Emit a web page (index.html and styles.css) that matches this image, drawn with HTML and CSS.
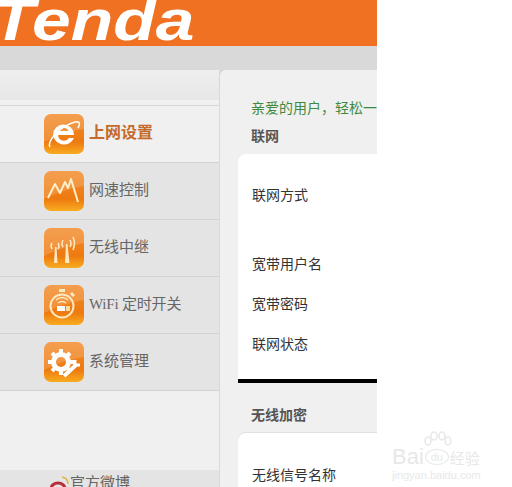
FILE: index.html
```html
<!DOCTYPE html>
<html lang="zh-CN">
<head>
    <meta charset="UTF-8" />
    <title>Tenda</title>
    <link rel="stylesheet" href="styles.css">
</head>
<body>
<div class="page">
    <div class="header"><div class="logo">Tenda</div></div>
    <div class="band"></div>

    <div class="content">
        <div class="sidebar">
            <div class="tab"></div>
            <div class="menu">
                <div class="menu-item active">
                    <svg class="icon" viewBox="0 0 40 40">
                        <path class="icon-top" d="M0 0h40v15q-20 3-40 13z"/>
                        <path d="M9 21a10.500 10.500 0 1 1 21 0H14a6 6 0 0 0 11 3h5a11 11 0 0 1-21-3zM14.500 17h10a5.500 5.500 0 0 0-10 0z" fill="#fff" fill-rule="evenodd"/>
                        <path d="M6 33c-3-5 8-20 25-25 4-1 6 1 3 6" fill="none" stroke="#fff" stroke-width="1.500"/>
                    </svg>
                    <span class="menu-text">上网设置</span>
                </div>
                <div class="menu-item">
                    <svg class="icon" viewBox="0 0 40 40">
                        <path class="icon-top" d="M0 0h40v15q-20 3-40 13z"/>
                        <path d="M4 27L11 13l5 9 5-11 3 6 3-9 7 23" fill="none" stroke="#ffeec8" stroke-width="2" stroke-linejoin="round"/>
                    </svg>
                    <span class="menu-text">网速控制</span>
                </div>
                <div class="menu-item">
                    <svg class="icon" viewBox="0 0 40 40">
                        <path class="icon-top" d="M0 0h40v15q-20 3-40 13z"/>
                        <path d="M10 35l1-16h1.500l1 16zM21 35l1-19h1.500l2 19z" fill="#ffe9c0"/>
                        <path d="M8 15q-2 3 0 6M14 15q2 3 0 6M19 12q-2 4 0 7M26 12q2 4 0 7M29 9q3 6 0 13" fill="none" stroke="#ffe9c0" stroke-width="1.500"/>
                    </svg>
                    <span class="menu-text">无线中继</span>
                </div>
                <div class="menu-item">
                    <svg class="icon" viewBox="0 0 40 40">
                        <path class="icon-top" d="M0 0h40v15q-20 3-40 13z"/>
                        <circle cx="18" cy="21" r="11.500" fill="none" stroke="#ffe9c0" stroke-width="2"/>
                        <path d="M15 4h6v3h-6zM28 7l3 3-2 2-3-3z" fill="#ffe9c0"/>
                        <path d="M12 15q6-5 12 0M14 18q4-3 8 0" fill="none" stroke="#ffe9c0" stroke-width="1.500"/>
                        <rect x="13" y="21" width="8" height="5" fill="#fff"/>
                        <rect x="22" y="21" width="4" height="5" fill="#ffd9a0"/>
                    </svg>
                    <span class="menu-text wifi">WiFi 定时开关</span>
                </div>
                <div class="menu-item">
                    <svg class="icon" viewBox="0 0 40 40">
                        <path class="icon-top" d="M0 0h40v15q-20 3-40 13z"/>
                        <circle cx="17" cy="20" r="7.500" fill="none" stroke="#fff" stroke-width="5"/>
                        <path d="M17 7v5M17 28v5M4 20h5M25 20h5M8 11l3 3M23 26l3 3M26 11l-3 3M8 29l3-3" stroke="#fff" stroke-width="4"/>
                        <path d="M20 34l12-11" stroke="#fff" stroke-width="4"/>
                        <path d="M31 18v5h5" fill="none" stroke="#fff" stroke-width="3"/>
                    </svg>
                    <span class="menu-text">系统管理</span>
                </div>
            </div>
            <div class="side-footer">
                <svg class="weibo" viewBox="0 0 20 20">
                    <ellipse cx="8" cy="13" rx="7" ry="6" fill="none" stroke="#b5303a" stroke-width="3"/>
                    <path d="M12 1q6 1 6 7" fill="none" stroke="#e0b040" stroke-width="1.500"/>
                </svg>
                <span>官方微博</span>
            </div>
        </div>

        <div class="main">
            <div class="intro">亲爱的用户，轻松一步即可上网</div>
            <div class="section-title first">联网</div>
            <div class="card card-net">
                <div class="row row-type">联网方式</div>
                <div class="row">宽带用户名</div>
                <div class="row">宽带密码</div>
                <div class="row">联网状态</div>
            </div>
            <div class="section-title">无线加密</div>
            <div class="card card-wifi">
                <div class="row">无线信号名称</div>
            </div>
        </div>
    </div>
</div>

<div class="watermark">
    <svg class="paw" viewBox="0 0 30 16">
        <g fill="none" stroke="#e8e8e8" stroke-width="1.500">
            <ellipse cx="5" cy="10" rx="3" ry="4"/>
            <ellipse cx="11" cy="5" rx="3" ry="4"/>
            <ellipse cx="19" cy="5" rx="3" ry="4"/>
            <ellipse cx="25" cy="10" rx="3" ry="4"/>
        </g>
    </svg>
    <div class="wm-brand">
        <span>Bai</span>
        <span class="wm-du">du</span>
        <span class="wm-cn">经验</span>
    </div>
    <div class="wm-url">jingyan.baidu.com</div>
</div>
</body>
</html>
```

FILE: styles.css
```css
html, body {
    margin: 0;
    padding: 0;
    background: #fff;
}
body {
    position: relative;
    height: 487px;
    overflow: hidden;
    font-family: "Noto Sans CJK SC", "Liberation Sans", sans-serif;
}
.page {
    width: 377px;
    height: 487px;
    overflow: hidden;
    background: #d9d9d9;
}
.header {
    height: 46px;
    background: #f07122;
    overflow: hidden;
}
.logo {
    width: 170px;
    margin: -9px 0 0 -8px;
    font-family: "Liberation Sans", sans-serif;
    font-size: 58px;
    line-height: 58px;
    font-style: italic;
    font-weight: bold;
    color: #fff;
    transform: scaleX(1.2);
    transform-origin: 0 0;
}
.band {
    height: 24px;
    background: #d9d9d9;
}
.content {
    display: flex;
}
.sidebar {
    width: 219px;
    flex-shrink: 0;
    margin-right: 1px;
    background: #f0f0f0;
}
.tab {
    height: 30px;
    background: linear-gradient(#eeeeee, #e7e7e7);
    border-radius: 4px 5px 0 0;
}
.menu {
    margin-top: 5px;
    border-top: 1px solid #d8d8d8;
}
.menu-item {
    display: flex;
    align-items: center;
    height: 56px;
    padding-left: 44px;
    background: #e4e4e4;
    border-bottom: 1px solid #d2d2d2;
    font-size: 15px;
    color: #666;
}
.menu-item.active {
    background: #f0f0f0;
    color: #c46a2c;
    font-size: 16px;
    font-weight: bold;
}
.menu-text {
    margin-bottom: 6px;
    white-space: nowrap;
}
.wifi {
    font-family: "Liberation Serif", "Noto Sans CJK SC", serif;
    letter-spacing: -0.2px;
}
.icon {
    width: 40px;
    height: 40px;
    margin-right: 5px;
    flex-shrink: 0;
    border-radius: 7px;
    background: linear-gradient(#f28c2c, #ee7a10 70%, #f8ac20);
}
.icon-top {
    fill: rgba(255, 255, 255, 0.16);
}
.side-footer {
    display: flex;
    align-items: flex-start;
    height: 30px;
    margin-top: 79px;
    padding-left: 50px;
    background: #e4e4e4;
    font-size: 15px;
    line-height: 24px;
    color: #666;
    overflow: hidden;
}
.weibo {
    width: 20px;
    height: 20px;
    margin-top: 6px;
}
.main {
    flex: 1;
    min-width: 0;
    padding-left: 18px;
    border-radius: 6px 0 0 0;
    background: #f0f0f0;
    white-space: nowrap;
}
.intro {
    margin: 27px 0 0 13px;
    font-size: 14px;
    line-height: 20px;
    color: #3f8a3f;
}
.section-title {
    margin: 22px 0 10px 13px;
    font-size: 14px;
    line-height: 18px;
    font-weight: bold;
    color: #555;
}
.section-title.first {
    margin-top: 9px;
    margin-bottom: 10px;
}
.card {
    background: #fff;
    padding-left: 14px;
    font-size: 14px;
    color: #333;
    border-radius: 8px 0 0 0;
}
.card-net {
    height: 195px;
    padding-top: 30px;
    border-bottom: 4px solid #000;
}
.card-wifi {
    height: 60px;
    padding-top: 31px;
    box-shadow: 0 -1px 0 #e0e0e0;
}
.row {
    height: 20px;
    line-height: 20px;
    margin-bottom: 20px;
}
.row-type {
    margin-bottom: 49px;
}
.watermark {
    position: absolute;
    left: 392px;
    top: 431px;
    width: 92px;
    color: #e8e8e8;
}
.paw {
    display: block;
    width: 30px;
    height: 16px;
    margin-left: 31px;
}
.wm-brand {
    display: flex;
    align-items: center;
    height: 20px;
    font-family: "Liberation Sans", sans-serif;
    font-size: 22px;
    white-space: nowrap;
}
.wm-du {
    width: 24px;
    height: 16px;
    margin: 0 1px;
    border: 1px solid #e8e8e8;
    border-radius: 50%;
    font-size: 11px;
    line-height: 15px;
    text-align: center;
    box-sizing: border-box;
}
.wm-cn {
    font-family: "Noto Sans CJK SC", sans-serif;
    font-size: 15px;
}
.wm-url {
    margin-top: 2px;
    font-family: "Liberation Sans", sans-serif;
    font-size: 11px;
    line-height: 12px;
    white-space: nowrap;
}
```
